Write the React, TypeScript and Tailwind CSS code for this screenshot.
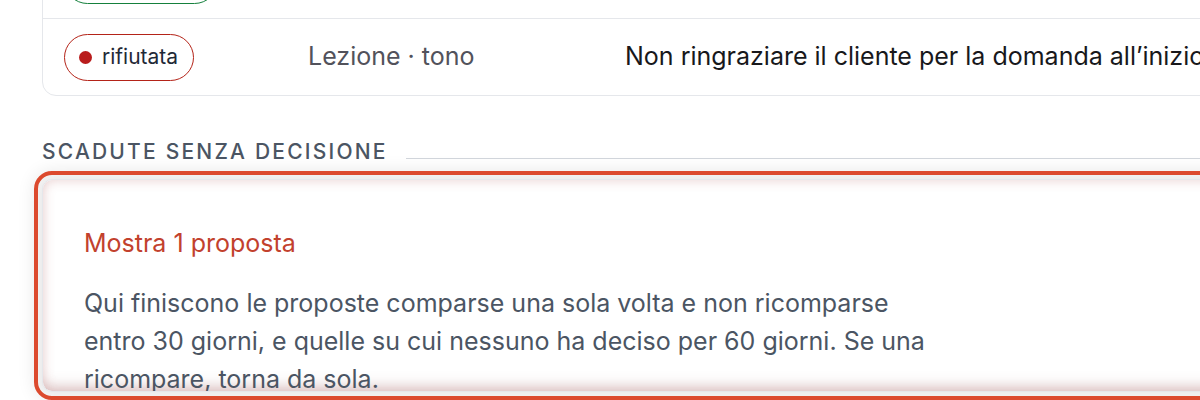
import React from "react";

const rows = [
  {
    status: "approvata",
    tone: "green",
    kind: "Lezione · stile",
    text: "Usare frasi brevi quando si spiegano i passaggi",
  },
  {
    status: "rifiutata",
    tone: "red",
    kind: "Lezione · tono",
    text: "Non ringraziare il cliente per la domanda all’inizio della risposta",
  },
];

const StatusPill = ({ status, tone }: { status: string; tone: string }) => {
  const isRed = tone === "red";
  return (
    <span
      className={
        isRed
          ? "inline-flex items-center gap-[10px] h-[47px] pl-[14px] pr-[15px] rounded-full border-[1.5px] border-[#b42318] text-[21px] text-[#1f2937]"
          : "inline-flex items-center gap-[10px] h-[47px] pl-[14px] pr-[15px] rounded-full border-[1.5px] border-[#15803d] text-[21px] text-[#1f2937]"
      }
    >
      <span
        className={
          isRed
            ? "w-[13px] h-[13px] rounded-full bg-[#b91c1c]"
            : "w-[13px] h-[13px] rounded-full bg-[#15803d]"
        }
      />
      {status}
    </span>
  );
};

export default function App() {
  return (
    <div className="w-[1200px] h-[400px] overflow-hidden bg-white font-['Inter',sans-serif]">
      <div className="ml-[42px] w-[1240px]">
        {/* Tabella decisioni */}
        <div className="-mt-[58px] border border-[#e5e7eb] rounded-[14px] bg-white">
          {rows.map((row, i) => (
            <div
              key={i}
              className={
                i < rows.length - 1
                  ? "grid grid-cols-[244px_317px_1fr] items-center h-[76px] px-[21px] border-b border-[#e5e7eb]"
                  : "grid grid-cols-[244px_317px_1fr] items-center h-[76px] px-[21px]"
              }
            >
              <div>
                <StatusPill status={row.status} tone={row.tone} />
              </div>
              <div className="text-[25px] text-[#52525b]">{row.kind}</div>
              <div className="text-[25px] text-[#18181b] whitespace-nowrap">
                {row.text}
              </div>
            </div>
          ))}
        </div>

        {/* Sezione scadute */}
        <div className="flex items-end gap-[18px] mt-[42px]">
          <h2 className="text-[21px] leading-[28px] font-medium tracking-[0.105em] text-[#4b5563]">
            SCADUTE SENZA DECISIONE
          </h2>
          <div className="flex-1 h-px bg-[#d1d5db] mb-[7px]" />
        </div>

        <div className="mt-[13px] h-[213px] overflow-hidden rounded-[10px] border border-[#e5e7eb] bg-white outline-[4px] outline-solid outline-[#dc4a2e] outline-offset-[4px] shadow-[0_0_18px_8px_rgba(0,0,0,0.09),inset_0_0_12px_rgba(170,70,70,0.26),inset_0_-14px_14px_-8px_rgba(150,90,90,0.22)]">
          <div className="pl-[41px] pt-[47px]">
            <div className="text-[25px] leading-[32px] text-[#c2412d]">
              Mostra 1 proposta
            </div>
            <p className="mt-[25px] max-w-[860px] text-[25px] leading-[38px] text-[#4b5563]">
              Qui finiscono le proposte comparse una sola volta e non ricomparse
              entro 30 giorni, e quelle su cui nessuno ha deciso per 60 giorni.
              Se una ricompare, torna da sola.
            </p>
          </div>
        </div>
      </div>
    </div>
  );
}
